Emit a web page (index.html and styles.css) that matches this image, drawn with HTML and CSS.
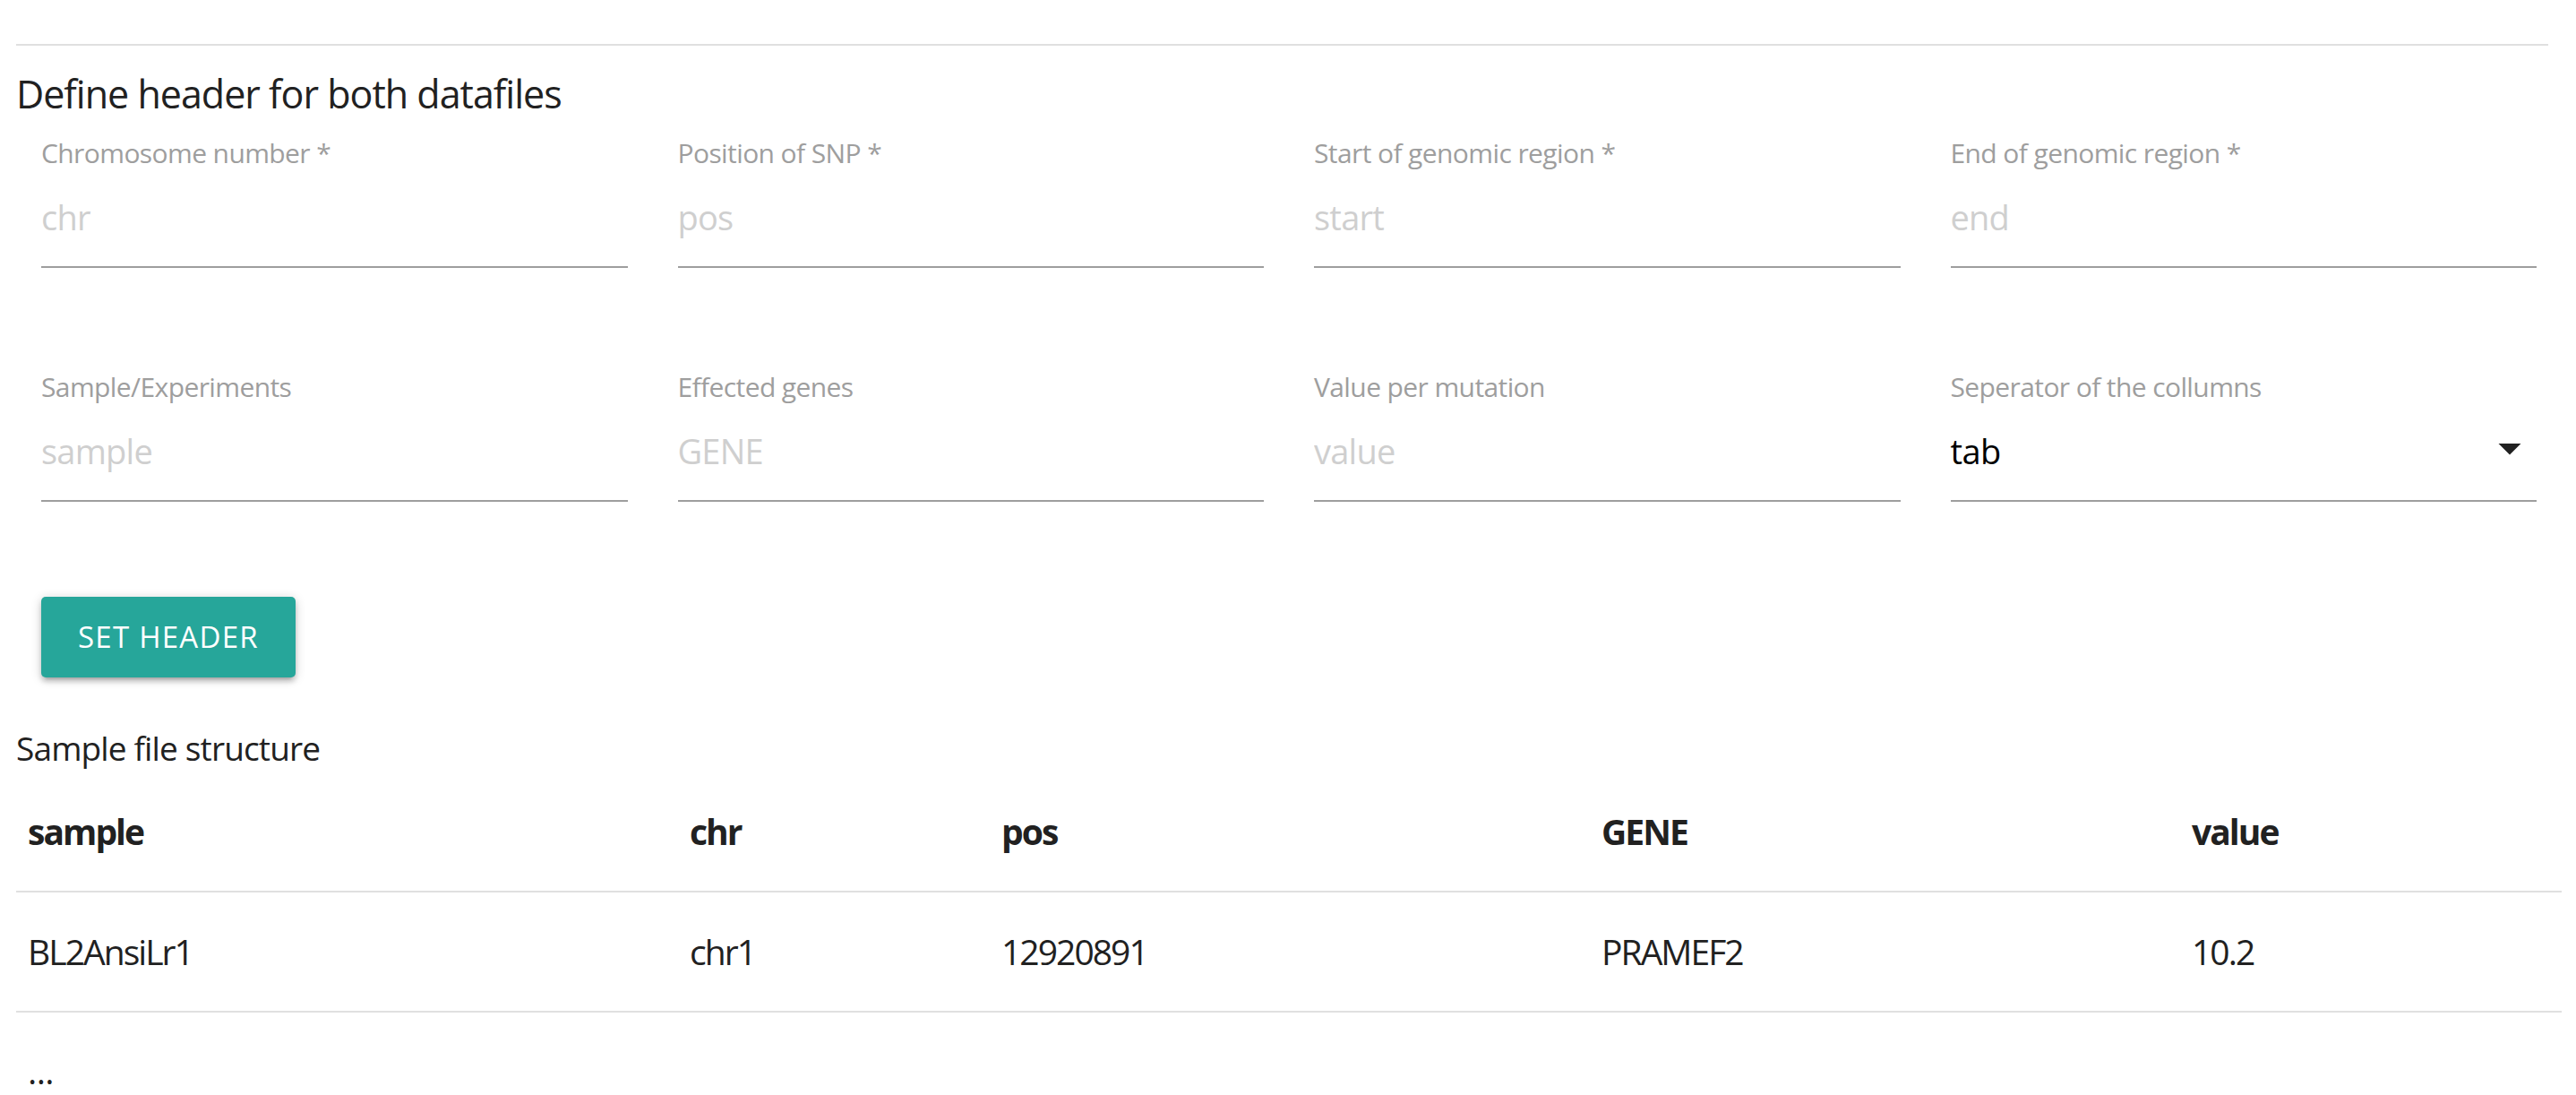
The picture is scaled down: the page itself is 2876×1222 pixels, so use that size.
FILE: index.html
```html
<!DOCTYPE html>
<html lang="en">
<head>
<meta charset="utf-8">
<title>Define header</title>
<link rel="stylesheet" href="styles.css">
</head>
<body>
<div class="page">
  <div class="divider"></div>
  <h5 class="title">Define header for both datafiles</h5>
  <div class="fields">
    <div class="field">
      <label class="label">Chromosome number *</label>
      <input class="input" type="text" placeholder="chr">
    </div>
    <div class="field">
      <label class="label">Position of SNP *</label>
      <input class="input" type="text" placeholder="pos">
    </div>
    <div class="field">
      <label class="label">Start of genomic region *</label>
      <input class="input" type="text" placeholder="start">
    </div>
    <div class="field">
      <label class="label">End of genomic region *</label>
      <input class="input" type="text" placeholder="end">
    </div>
    <div class="field">
      <label class="label">Sample/Experiments</label>
      <input class="input" type="text" placeholder="sample">
    </div>
    <div class="field">
      <label class="label">Effected genes</label>
      <input class="input" type="text" placeholder="GENE">
    </div>
    <div class="field">
      <label class="label">Value per mutation</label>
      <input class="input" type="text" placeholder="value">
    </div>
    <div class="field">
      <label class="label">Seperator of the collumns</label>
      <div class="select">
        <span class="select-value">tab</span>
        <svg class="caret" viewBox="0 0 24 24" width="60" height="60"><path d="M7 10l5 5 5-5z"/></svg>
      </div>
    </div>
  </div>
  <div class="actions">
    <button class="btn" type="button">SET HEADER</button>
  </div>
  <p class="subtitle">Sample file structure</p>
  <table class="sample-table">
    <colgroup>
      <col class="c1"><col class="c2"><col class="c3"><col class="c4"><col class="c5">
    </colgroup>
    <thead>
      <tr><th>sample</th><th>chr</th><th>pos</th><th>GENE</th><th>value</th></tr>
    </thead>
    <tbody>
      <tr><td>BL2AnsiLr1</td><td>chr1</td><td>12920891</td><td>PRAMEF2</td><td>10.2</td></tr>
    </tbody>
  </table>
  <p class="dots">...</p>
</div>
</body>
</html>
```
FILE: styles.css
```css
html, body {
  margin: 0;
  padding: 0;
  background: #ffffff;
}
body {
  font-family: "Open Sans", "Noto Sans", sans-serif;
  color: #212121;
  letter-spacing: -0.035em;
}
.page {
  padding: 0 16px 0 18px;
}
.divider {
  height: 2px;
  background: #e0e0e0;
  margin: 49px 15px 0 0;
}
.title {
  margin: 24px 0 0 0;
  font-size: 43px;
  line-height: 60px;
  font-weight: 400;
  letter-spacing: -0.023em;
}
.fields {
  display: grid;
  grid-template-columns: repeat(4, 1fr);
  row-gap: 113px;
  margin-top: 16px;
}
.field {
  padding: 0 28px;
  display: flex;
  flex-direction: column;
}
.label {
  display: block;
  font-size: 30px;
  line-height: 40px;
  height: 40px;
  color: #9e9e9e;
  white-space: nowrap;
  letter-spacing: -0.02em;
}
.input {
  display: block;
  box-sizing: content-box;
  margin: 21px 0 0 0;
  padding: 0 0 25px 0;
  height: 60px;
  width: 100%;
  border: none;
  border-bottom: 2px solid #9e9e9e;
  outline: none;
  background: transparent;
  font-family: inherit;
  font-size: 38px;
  letter-spacing: -0.02em;
  color: #212121;
}
.input::placeholder {
  color: #cfcfcf;
}
.select {
  margin-top: 21px;
  height: 60px;
  padding-bottom: 25px;
  border-bottom: 2px solid #9e9e9e;
  display: flex;
  align-items: center;
  justify-content: space-between;
}
.select-value {
  font-size: 38px;
  line-height: 60px;
  color: #000000;
}
.caret {
  display: block;
  fill: #212121;
  margin-top: -7px;
}
.actions {
  padding: 0 28px;
  margin-top: 106px;
}
.btn {
  display: block;
  height: 90px;
  padding: 0 41px;
  border: none;
  border-radius: 5px;
  background: #26a69a;
  color: #ffffff;
  font-family: inherit;
  font-size: 33px;
  line-height: 90px;
  letter-spacing: 1.25px;
  box-shadow: 0 5px 5px 0 rgba(0,0,0,0.14), 0 7px 2px -5px rgba(0,0,0,0.12), 0 2px 12px 0 rgba(0,0,0,0.2);
}
.subtitle {
  margin: 54px 0 0 0;
  font-size: 37px;
  line-height: 50px;
  letter-spacing: -0.023em;
}
.sample-table {
  margin-top: 2px;
  width: 100%;
  border-collapse: collapse;
  table-layout: fixed;
  font-size: 39px;
  line-height: 56px;
  letter-spacing: -0.05em;
}
.c1 { width: 739px; }
.c2 { width: 348px; }
.c3 { width: 670px; }
.c4 { width: 659px; }
.c5 { width: 426px; }
.sample-table tr {
  border-bottom: 2px solid #e0e0e0;
}
.sample-table th,
.sample-table td {
  padding: 38px 13px;
  text-align: left;
  vertical-align: middle;
}
.sample-table th {
  font-weight: 700;
}
.dots {
  margin: 37px 0 0 0;
  padding-left: 13px;
  font-size: 39px;
  line-height: 56px;
}
```
